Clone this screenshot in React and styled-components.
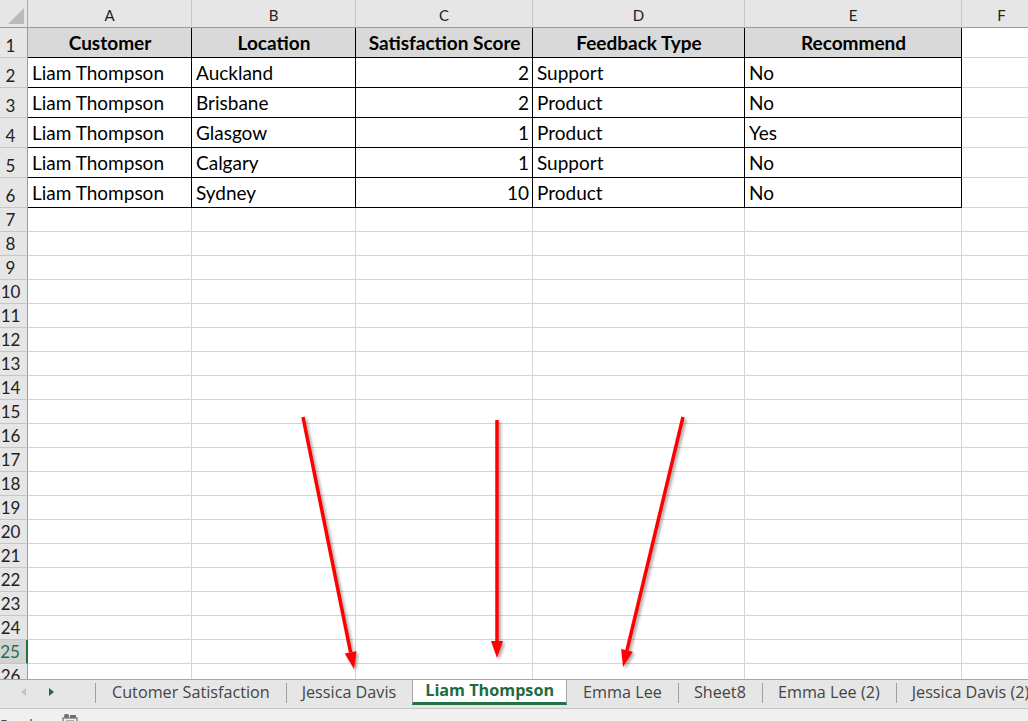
import React from "react"
import styled, { createGlobalStyle } from "styled-components"

const GlobalStyle = createGlobalStyle`
  html, body {
    margin: 0;
    padding: 0;
    overflow: hidden;
    background: #fff;
  }
`

const COLUMNS = [
  { key: "A", width: 164 },
  { key: "B", width: 164 },
  { key: "C", width: 177, align: "right" },
  { key: "D", width: 212 },
  { key: "E", width: 217 },
  { key: "F", width: 80 },
]

const HEADERS = ["Customer", "Location", "Satisfaction Score", "Feedback Type", "Recommend"]

const ROWS = [
  ["Liam Thompson", "Auckland", 2, "Support", "No"],
  ["Liam Thompson", "Brisbane", 2, "Product", "No"],
  ["Liam Thompson", "Glasgow", 1, "Product", "Yes"],
  ["Liam Thompson", "Calgary", 1, "Support", "No"],
  ["Liam Thompson", "Sydney", 10, "Product", "No"],
]

const TOTAL_ROWS = 26
const SELECTED_ROW = 25

const TABS = [
  { name: "Cutomer Satisfaction" },
  { name: "Jessica Davis" },
  { name: "Liam Thompson", active: true },
  { name: "Emma Lee" },
  { name: "Sheet8" },
  { name: "Emma Lee (2)" },
  { name: "Jessica Davis (2)" },
]

const ARROWS = [
  { from: [303, 417], to: [354, 669] },
  { from: [497, 420], to: [497, 658] },
  { from: [683, 417], to: [623, 667] },
]

function App() {
  const rowTemplate = [28, 30, ...Array(5).fill(30), ...Array(TOTAL_ROWS - 6).fill(24)]
    .map((h) => h + "px")
    .join(" ")

  const cells = []
  cells.push(
    <Corner key="corner">
      <svg width="28" height="28" viewBox="0 0 28 28">
        <polygon points="8,24 24,8 24,24" fill="#b9b9b9" />
      </svg>
    </Corner>
  )
  COLUMNS.forEach((c) => cells.push(<ColHead key={"h" + c.key}>{c.key}</ColHead>))

  for (let r = 1; r <= TOTAL_ROWS; r++) {
    const selected = r === SELECTED_ROW
    cells.push(
      <RowHead key={"r" + r} $selected={selected}>
        {r}
      </RowHead>
    )
    COLUMNS.forEach((c, ci) => {
      const inTable = r <= 6 && ci < 5
      let value = ""
      if (r === 1 && ci < 5) value = HEADERS[ci]
      if (r > 1 && r <= 6 && ci < 5) value = ROWS[r - 2][ci]
      cells.push(
        <Cell
          key={r + c.key}
          $table={inTable}
          $head={r === 1 && ci < 5}
          $align={r === 1 ? "center" : c.align}
        >
          {value}
        </Cell>
      )
    })
  }

  return (
    <>
      <GlobalStyle />
      <Window>
        <SheetArea>
          <Grid style={{ gridTemplateRows: rowTemplate }}>{cells}</Grid>
        </SheetArea>

        <TabBar>
          <TabNav>
            <svg width="8" height="10" viewBox="0 0 8 10">
              <polygon points="7,1 2,5 7,9" fill="#c3c3c3" />
            </svg>
            <svg width="8" height="10" viewBox="0 0 8 10">
              <polygon points="1,1 6,5 1,9" fill="#1e6b3f" />
            </svg>
          </TabNav>
          {TABS.map((t, i) => {
            const prev = TABS[i - 1]
            return (
              <Tab
                key={t.name}
                $active={t.active}
                $divider={!t.active && !(prev && prev.active) && i > 0}
              >
                {t.name}
              </Tab>
            )
          })}
        </TabBar>

        <StatusBar>
          <StatusText>Ready</StatusText>
          <svg width="16" height="14" viewBox="0 0 16 14">
            <rect x="2" y="1" width="5" height="4" rx="2" fill="#6d6d6d" />
            <rect x="1" y="5" width="14" height="8" fill="none" stroke="#6d6d6d" strokeWidth="1.2" />
            <rect x="8" y="2" width="6" height="3" fill="#6d6d6d" />
            <line x1="4" y1="8" x2="12" y2="8" stroke="#6d6d6d" />
            <line x1="4" y1="10.5" x2="12" y2="10.5" stroke="#6d6d6d" />
          </svg>
        </StatusBar>

        <Overlay width="1028" height="721" viewBox="0 0 1028 721">
          <defs>
            <filter id="arrowShadow" x="-20%" y="-20%" width="140%" height="140%">
              <feDropShadow dx="2" dy="2" stdDeviation="1.4" floodColor="#000" floodOpacity="0.35" />
            </filter>
          </defs>
          {ARROWS.map((a, i) => (
            <Arrow key={i} from={a.from} to={a.to} />
          ))}
        </Overlay>
      </Window>
    </>
  )
}

function Arrow({ from, to }) {
  const dx = to[0] - from[0]
  const dy = to[1] - from[1]
  const len = Math.hypot(dx, dy)
  const ux = dx / len
  const uy = dy / len
  const headLen = 17
  const half = 6
  const bx = to[0] - ux * headLen
  const by = to[1] - uy * headLen
  const px = -uy * half
  const py = ux * half
  const head = `${to[0]},${to[1]} ${bx + px},${by + py} ${bx - px},${by - py}`
  return (
    <g filter="url(#arrowShadow)">
      <line x1={from[0]} y1={from[1]} x2={bx} y2={by} stroke="#ff0000" strokeWidth="3.5" />
      <polygon points={head} fill="#ff0000" />
    </g>
  )
}

export default App

const Window = styled.div`
  position: relative;
  width: 1028px;
  height: 730px;
  display: flex;
  flex-direction: column;
  background: #fff;
`

const SheetArea = styled.div`
  height: 679px;
  overflow: hidden;
  flex-shrink: 0;
`

const Grid = styled.div`
  display: grid;
  grid-template-columns: 28px ${COLUMNS.map((c) => c.width + "px").join(" ")};
`

const Corner = styled.div`
  box-sizing: border-box;
  background: #e6e6e6;
  border-right: 1px solid #ababab;
  border-bottom: 1px solid #9b9b9b;
  overflow: hidden;

  svg {
    display: block;
  }
`

const ColHead = styled.div`
  box-sizing: border-box;
  background: #e6e6e6;
  border-right: 1px solid #c6c6c6;
  border-bottom: 1px solid #9b9b9b;
  display: flex;
  align-items: flex-end;
  justify-content: center;
  padding-bottom: 4px;
  font-family: Lato, "Liberation Sans", sans-serif;
  font-size: 15px;
  line-height: 1;
  color: #222;
`

const RowHead = styled.div`
  box-sizing: border-box;
  background: ${(p) => (p.$selected ? "#d2d2d2" : "#e6e6e6")};
  border-right: ${(p) => (p.$selected ? "2px solid #217346" : "1px solid #9b9b9b")};
  border-bottom: 1px solid #c6c6c6;
  display: flex;
  align-items: flex-end;
  justify-content: center;
  padding: 0 6px 3px 0;
  font-family: Lato, "Liberation Sans", sans-serif;
  font-size: 17px;
  line-height: 1;
  color: ${(p) => (p.$selected ? "#217346" : "#222")};
`

const Cell = styled.div`
  box-sizing: border-box;
  border-right: 1px solid ${(p) => (p.$table ? "#000" : "#d4d4d4")};
  border-bottom: 1px solid ${(p) => (p.$table ? "#000" : "#d4d4d4")};
  background: ${(p) => (p.$head ? "#d9d9d9" : "#fff")};
  display: flex;
  align-items: flex-end;
  justify-content: ${(p) =>
    p.$align === "right" ? "flex-end" : p.$align === "center" ? "center" : "flex-start"};
  padding: 0 3px 5px 4px;
  font-family: Lato, "Liberation Sans", sans-serif;
  font-size: 19px;
  font-weight: ${(p) => (p.$head ? 700 : 400)};
  line-height: 1;
  color: #000;
  white-space: nowrap;
  overflow: hidden;
`

const TabBar = styled.div`
  box-sizing: border-box;
  height: 29px;
  flex-shrink: 0;
  display: flex;
  align-items: flex-start;
  background: #e6e6e6;
  border-top: 1px solid #a6a6a6;
  white-space: nowrap;
  overflow: hidden;
`

const TabNav = styled.div`
  position: relative;
  width: 96px;
  height: 23px;
  flex-shrink: 0;
  display: flex;
  align-items: center;
  gap: 21px;
  padding-left: 19px;
  box-sizing: border-box;

  &::after {
    content: "";
    position: absolute;
    right: 0;
    top: 3px;
    height: 20px;
    border-right: 1px solid #a0a0a0;
  }
`

const Tab = styled.div`
  position: relative;
  box-sizing: border-box;
  height: ${(p) => (p.$active ? "26px" : "23px")};
  margin-top: ${(p) => (p.$active ? "-1px" : "0")};
  display: flex;
  align-items: center;
  padding: ${(p) => (p.$active ? "0 12px 2px" : "0 16px")};
  font-family: "Open Sans", "Liberation Sans", sans-serif;
  font-size: 16.2px;
  font-weight: ${(p) => (p.$active ? 700 : 400)};
  color: ${(p) => (p.$active ? "#1e6b3f" : "#444")};
  background: ${(p) => (p.$active ? "#fff" : "transparent")};
  border-left: ${(p) => (p.$active ? "1px solid #a6a6a6" : "none")};
  border-right: ${(p) => (p.$active ? "1px solid #a6a6a6" : "none")};
  border-bottom: ${(p) => (p.$active ? "3px solid #217346" : "none")};

  &::before {
    content: "";
    display: ${(p) => (p.$divider ? "block" : "none")};
    position: absolute;
    left: 0;
    top: 3px;
    height: 20px;
    border-left: 1px solid #a0a0a0;
  }
`

const StatusBar = styled.div`
  box-sizing: border-box;
  height: 22px;
  flex-shrink: 0;
  display: flex;
  align-items: flex-start;
  gap: 22px;
  padding-top: 4px;
  background: #f0f0f0;
  border-top: 1px solid #c6c6c6;
`

const StatusText = styled.span`
  font-family: "Open Sans", "Liberation Sans", sans-serif;
  font-size: 14px;
  line-height: 1;
  color: #444;
  margin-top: 5px;
`

const Overlay = styled.svg`
  position: absolute;
  left: 0;
  top: 0;
  pointer-events: none;
`
